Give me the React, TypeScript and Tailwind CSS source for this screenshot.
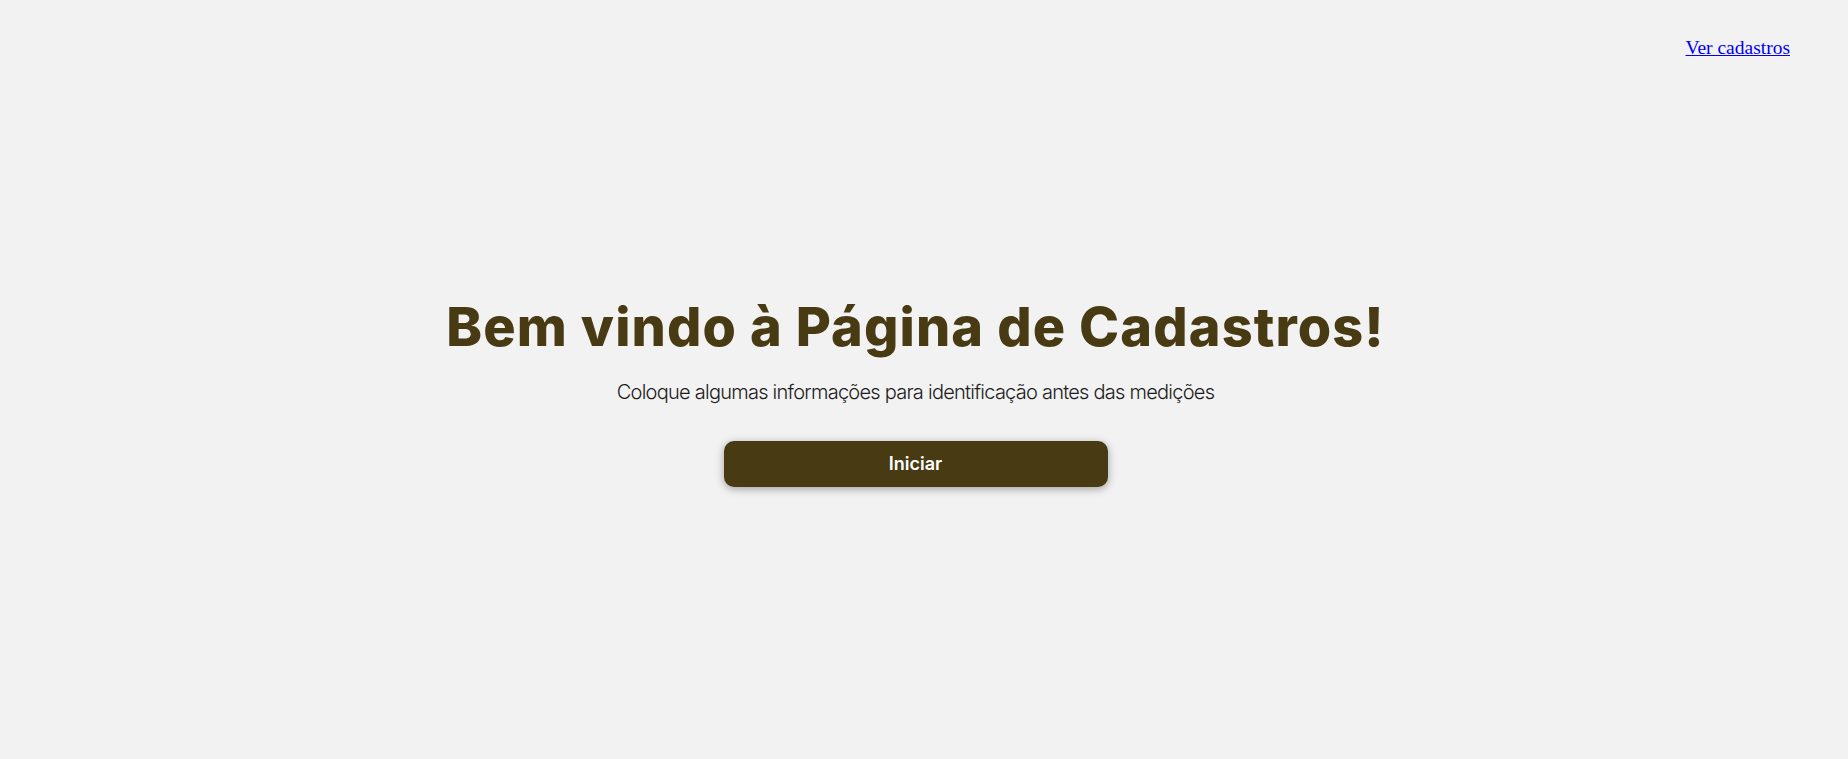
export default function App() {
  return (
    <div className="flex h-[759px] flex-col bg-[#f2f2f2]">
      <header className="flex justify-end pr-[58px] pt-[37px]">
        <a href="#" className="font-['Liberation_Serif',serif] text-[19.5px] leading-[22px] text-[#0000ee] underline">
          Ver cadastros
        </a>
      </header>
      <main className="flex flex-1 flex-col items-center pr-[17px] pt-[236px]">
        <h1 className="font-['Inter',sans-serif] text-[54px] leading-[1.2] font-extrabold tracking-[1.1px] text-[#483b13]">
          Bem vindo à Página de Cadastros!
        </h1>
        <p className="mt-[17px] font-['Inter',sans-serif] text-[20px] leading-[1.5] font-light tracking-[-0.75px] text-[#1c1c1c]">
          Coloque algumas informações para identificação antes das medições
        </p>
        <button className="mt-[34px] h-[46px] w-[384px] rounded-[10px] bg-[#483b13] font-['Inter',sans-serif] text-[18px] font-semibold text-white shadow-[0_2px_8px_rgba(0,0,0,0.35)]">
          Iniciar
        </button>
      </main>
    </div>
  );
}
